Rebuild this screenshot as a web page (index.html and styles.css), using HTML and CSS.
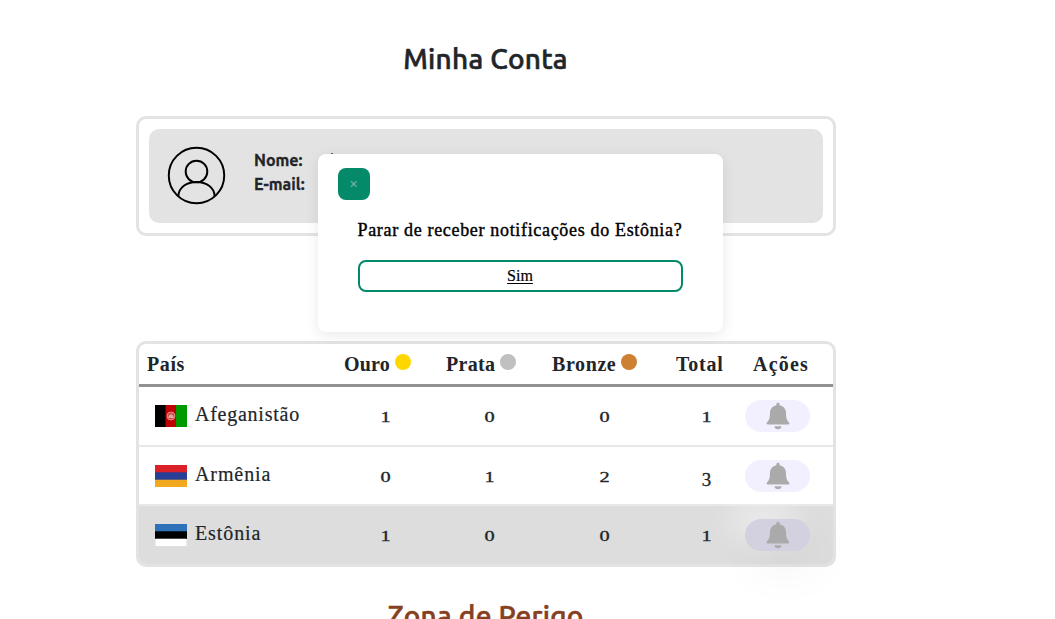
FILE: index.html
```html
<!DOCTYPE html>
<html lang="pt-BR">
<head>
<meta charset="utf-8">
<title>Minha Conta</title>
<link rel="stylesheet" href="styles.css">
</head>
<body>
<svg width="0" height="0" class="defs">
  <symbol id="bell" viewBox="0 0 24 28">
    <path d="M12 .8c-1 0-1.600.7-1.600 1.600v.8C6.500 4 4 7 4 11c0 6-1.300 7.600-3 9.500C.1 21.700.6 22.500 2 22.500h20c1.400 0 1.900-.8 1-2-1.700-1.900-3-3.500-3-9.500 0-4-2.500-7-6.400-7.800v-.8C13.600 1.500 13 .8 12 .8zM8.500 24.300h7c0 2-1.600 3-3.500 3s-3.500-1-3.500-3z"/>
  </symbol>
</svg>
<main class="page">
  <h1 class="title">Minha Conta</h1>
  <section class="account">
    <div class="account-body">
      <svg class="avatar" viewBox="0 0 60 60">
        <circle cx="30" cy="30" r="28.200"/><circle cx="30" cy="26" r="11"/>
        <path d="M11.500 51C12 42 20 36.700 30 36.700S48 42 48.500 51"/>
      </svg>
      <dl class="fields">
        <div><dt>Nome:</dt><dd>i</dd></div>
        <div><dt>E-mail:</dt></div>
      </dl>
    </div>
  </section>
  <section class="table">
    <div class="row head">
      <span><b class="h-pais">País</b></span>
      <span><b class="h-ouro">Ouro</b><i class="dot gold"></i></span>
      <span><b class="h-prata">Prata</b><i class="dot silver"></i></span>
      <span><b class="h-bronze">Bronze</b><i class="dot bronze"></i></span>
      <span><b class="h-total">Total</b></span>
      <span><b class="h-acoes">Ações</b></span>
    </div>
    <div class="row">
      <span class="country"><svg class="flag" viewBox="0 0 32 22"><path d="M0 0h11v22H0z"/><path fill="#bf0000" d="M10.500 0H21v22H10.500z"/><path fill="#009900" d="M21 0h11v22H21z"/><circle cx="16" cy="11" r="4" fill="#cf4b43" stroke="#dd8b83"/><path d="M13.500 13h5v-2l-2.500-2-2.500 2z" fill="#e6a49d"/></svg><span class="name">Afeganistão</span></span>
      <span class="num"><em>1</em></span><span class="num"><em>0</em></span><span class="num"><em>0</em></span><span class="num"><em>1</em></span>
      <span class="action"><button class="notify"><svg><use href="#bell"/></svg></button></span>
    </div>
    <div class="row second">
      <span class="country"><svg class="flag" viewBox="0 0 32 22"><path fill="#db2027" d="M0 0h32v8H0z"/><path fill="#273e96" d="M0 7.300h32V15H0z"/><path fill="#f2a91f" d="M0 14.700h32V22H0z"/></svg><span class="name">Armênia</span></span>
      <span class="num"><em>0</em></span><span class="num"><em>1</em></span><span class="num"><em>2</em></span><span class="num low"><em>3</em></span>
      <span class="action"><button class="notify"><svg><use href="#bell"/></svg></button></span>
    </div>
    <div class="row selected">
      <span class="country"><svg class="flag" viewBox="0 0 32 22"><path fill="#2d72b9" d="M0 0h32v8H0z"/><path d="M0 7.300h32V15H0z"/><path fill="#fff" d="M.5 14.700h31V22H.5z"/></svg><span class="name">Estônia</span></span>
      <span class="num"><em>1</em></span><span class="num"><em>0</em></span><span class="num"><em>0</em></span><span class="num"><em>1</em></span>
      <span class="action"><button class="notify active"><svg><use href="#bell"/></svg></button></span>
    </div>
  </section>
  <h2 class="danger">Zona de Perigo</h2>
</main>
<div class="modal">
  <button class="close">×</button>
  <p class="question">Parar de receber notificações do Estônia?</p>
  <button class="confirm"><u>Sim</u></button>
</div>
</body>
</html>
```
FILE: styles.css
```css
* { box-sizing: border-box; }
body { margin: 0; height: 619px; overflow: hidden; background: #fff; color: #212529; font-family: "Liberation Serif", serif; }
.defs { position: absolute; }
button { padding: 0; border: 0; font: inherit; }
.page { width: 700px; margin-left: 136px; padding-top: 39px; }
.title, .danger { margin: 0 1px 0 0; height: 40px; text-align: center; font: 500 28px/40px Ubuntu, "Noto Sans", sans-serif; letter-spacing: .28px; white-space: nowrap; -webkit-text-stroke: .6px; }
.account { height: 120px; margin-top: 37px; padding: 10px; border: 3px solid #e3e3e3; border-radius: 10px; }
.account-body { height: 94px; display: flex; background: #e3e3e3; border-radius: 10px; padding: 17px 18px; }
.avatar { width: 59px; height: 59px; fill: none; stroke: #000; stroke-width: 2; }
.fields { margin: 2px 0 0 28px; font: 700 16px/24px Ubuntu, "Noto Sans", sans-serif; }
.fields div { display: flex; height: 24px; }
.fields dt { width: 76px; white-space: nowrap; -webkit-text-stroke: .3px; }
.fields dd { margin: 0; font-weight: 400; }
.table { height: 226px; margin-top: 105px; border: 3px solid #e3e3e3; border-radius: 10px; }
.row { display: grid; grid-template-columns: 197px 102px 106px 124px 77px 88px; height: 60px; border-bottom: 2px solid #e8e8e8; align-items: center; }
.row.head { height: 43px; border-bottom: 3px solid #919191; padding-bottom: 1px; }
.row.second { height: 59px; padding-top: 1px; }
.row.selected { height: 58px; border: 0; background: #ddd; border-radius: 0 0 7px 7px; }
.head > span { display: flex; align-items: center; padding-left: 8px; font-size: 20px; line-height: 24px; white-space: nowrap; }
.dot { width: 16px; height: 16px; margin: -3px 0 0 5px; border-radius: 50%; flex: none; }
.gold { background: #ffd700; }
.silver { background: #c0c0c0; }
.bronze { background: #cd7f32; }
.h-pais { width: 38px; letter-spacing: .6px; }
.h-ouro { width: 46px; letter-spacing: .2px; }
.h-prata { width: 49px; letter-spacing: .3px; }
.h-bronze { width: 64px; letter-spacing: .6px; }
.h-total { letter-spacing: .8px; }
.h-acoes { letter-spacing: 1.2px; }
.country { display: flex; align-items: center; padding-left: 16px; font-size: 20px; line-height: 24px; white-space: nowrap; }
.flag { width: 32px; height: 22px; margin-right: 8px; }
.name { margin-top: -4px; letter-spacing: .75px; -webkit-text-stroke: .2px; }
.second .name, .selected .name { margin-top: -5px; letter-spacing: .9px; }
.num { text-align: center; font-size: 14px; line-height: 20px; padding: 4px 3px 0 0; }
.num:nth-child(5) { padding-right: 0; }
.num em { display: inline-block; font-style: normal; transform: scaleX(1.45); -webkit-text-stroke: .3px; }
.num.low { padding-top: 7px; font-size: 18px; }
.num.low em { transform: scaleX(1.05); }
.notify { display: flex; align-items: center; justify-content: center; width: 65px; height: 32px; border-radius: 16px; background: #f2f0fe; }
.notify svg { width: 24px; height: 28px; fill: #aaa; }
.notify.active { background: #d3d0df; box-shadow: 8px 16px 50px rgba(0,0,0,.06), -12px -12px 30px rgba(255,255,255,.55); }
.danger { margin-top: 29px; color: #863f20; }
.modal { position: absolute; left: 317.5px; top: 154px; width: 405px; height: 178px; padding: 14px 40px; border-radius: 8px; background: #fff; box-shadow: 0 3px 14px rgba(0,0,0,.09); color: #000; }
.close { display: block; width: 32px; height: 32px; margin-left: -20px; border-radius: 8px; background: #048a68; color: #82b5a7; font: 14px/32px "Liberation Sans", sans-serif; }
.question { margin: 18px 0 0; height: 24px; font-size: 18px; line-height: 24px; letter-spacing: .67px; white-space: nowrap; -webkit-text-stroke: .4px; }
.confirm { display: block; width: 325px; height: 32px; margin-top: 18px; border: 2px solid #048a68; border-radius: 8px; background: #fff; color: #000; font-size: 16px; line-height: 26px; -webkit-text-stroke: .2px; }
.confirm u { text-underline-offset: 2px; }
```
